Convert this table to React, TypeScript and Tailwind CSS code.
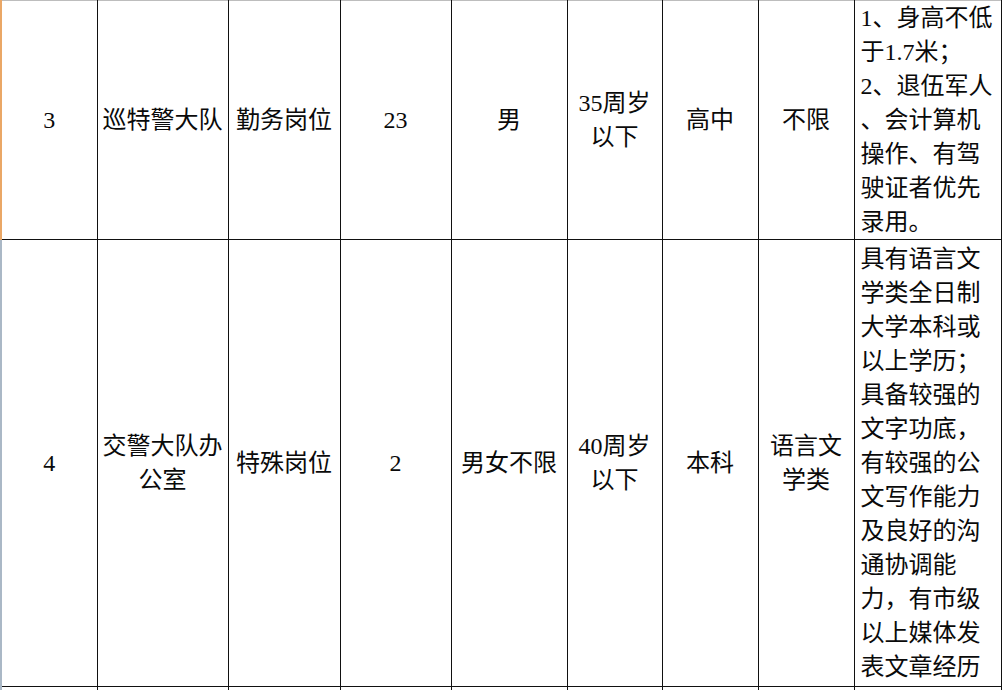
const font = { fontFamily: '"Liberation Serif", "Noto Sans CJK SC", serif' };

type Row = {
  no: string;
  dept: string[];
  post: string;
  count: string;
  gender: string;
  age: string[];
  edu: string;
  major: string[];
  notes: string[];
};

const rows: Row[] = [
  {
    no: '3',
    dept: ['巡特警大队'],
    post: '勤务岗位',
    count: '23',
    gender: '男',
    age: ['35周岁', '以下'],
    edu: '高中',
    major: ['不限'],
    notes: ['1、身高不低', '于1.7米；', '2、退伍军人', '、会计算机', '操作、有驾', '驶证者优先', '录用。'],
  },
  {
    no: '4',
    dept: ['交警大队办', '公室'],
    post: '特殊岗位',
    count: '2',
    gender: '男女不限',
    age: ['40周岁', '以下'],
    edu: '本科',
    major: ['语言文', '学类'],
    notes: [
      '具有语言文',
      '学类全日制',
      '大学本科或',
      '以上学历；',
      '具备较强的',
      '文字功底，',
      '有较强的公',
      '文写作能力',
      '及良好的沟',
      '通协调能',
      '力，有市级',
      '以上媒体发',
      '表文章经历',
    ],
  },
];

function Lines({ items }: { items: string[] }) {
  return (
    <>
      {items.map((t) => (
        <div key={t} className="whitespace-nowrap">
          {t}
        </div>
      ))}
    </>
  );
}

export default function App() {
  const cell = 'border border-[#111] text-center align-middle p-0';

  return (
    <div className="w-[1006px] h-[690px] overflow-hidden bg-white" style={font}>
      <table className="table-fixed border-collapse text-[24px] leading-[34px] text-[#0a0a0a]">
        <colgroup>
          <col className="w-[96px]" />
          <col className="w-[131px]" />
          <col className="w-[112px]" />
          <col className="w-[111px]" />
          <col className="w-[116px]" />
          <col className="w-[95px]" />
          <col className="w-[96px]" />
          <col className="w-[96px]" />
          <col className="w-[147px]" />
        </colgroup>
        <tbody>
          {rows.map((r, i) => (
            <tr key={r.no} className={i === 0 ? 'h-[238px]' : 'h-[447px]'}>
              <td
                className={`${cell} border-l-2 ${
                  i === 0 ? 'border-l-[#eaa766] border-t-[#bdbdbd]' : 'border-l-[#aab8c6]'
                }`}
              >
                {r.no}
              </td>
              <td className={`${cell} ${i === 0 ? 'border-t-[#bdbdbd]' : ''}`}>
                <Lines items={r.dept} />
              </td>
              <td className={`${cell} ${i === 0 ? 'border-t-[#bdbdbd]' : ''}`}>{r.post}</td>
              <td className={`${cell} ${i === 0 ? 'border-t-[#bdbdbd]' : ''}`}>{r.count}</td>
              <td className={`${cell} ${i === 0 ? 'border-t-[#bdbdbd]' : ''}`}>{r.gender}</td>
              <td className={`${cell} ${i === 0 ? 'border-t-[#bdbdbd]' : ''}`}>
                <Lines items={r.age} />
              </td>
              <td className={`${cell} ${i === 0 ? 'border-t-[#bdbdbd]' : ''}`}>{r.edu}</td>
              <td className={`${cell} ${i === 0 ? 'border-t-[#bdbdbd]' : ''}`}>
                <Lines items={r.major} />
              </td>
              <td
                className={`border border-[#111] align-middle text-left pl-[6px] ${
                  i === 0 ? 'border-t-[#bdbdbd]' : ''
                }`}
              >
                <Lines items={r.notes} />
              </td>
            </tr>
          ))}
          <tr className="h-[40px]">
            <td className={`${cell} border-l-2 border-l-[#aab8c6]`} />
            <td className={cell} />
            <td className={cell} />
            <td className={cell} />
            <td className={cell} />
            <td className={cell} />
            <td className={cell} />
            <td className={cell} />
            <td className={cell} />
          </tr>
        </tbody>
      </table>
    </div>
  );
}
